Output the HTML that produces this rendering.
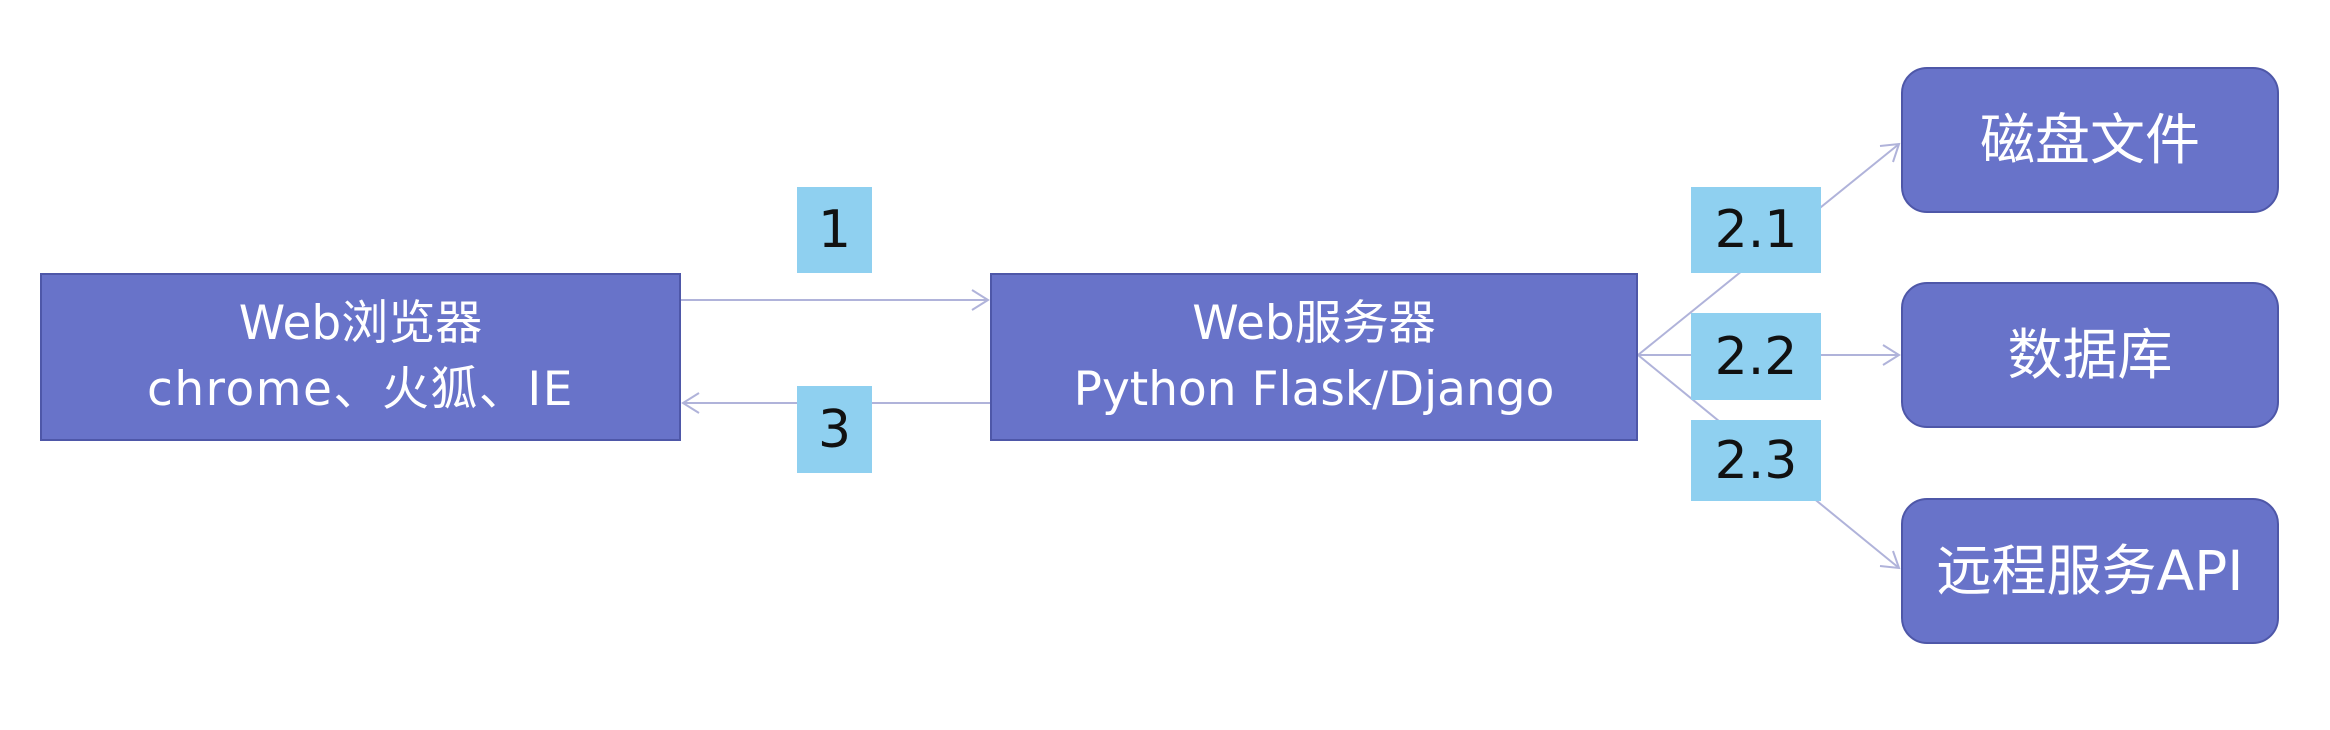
<!DOCTYPE html>
<html><head><meta charset="utf-8"><style>
body{margin:0;width:2330px;height:730px;background:#fff;overflow:hidden;position:relative;font-family:"DejaVu Sans","Noto Sans CJK SC",sans-serif}
.b{position:absolute;background:#6873c9;border:2px solid #4e57a8;box-sizing:border-box;color:#fff;display:flex;flex-direction:column;align-items:center;justify-content:center;font-size:47px;line-height:66px;text-align:center}
.r{border-radius:26px;font-size:55px}
.l{position:absolute;background:#8fd0f0;color:#111;font-size:52px;display:flex;align-items:center;justify-content:center}
svg{position:absolute;left:0;top:0}
</style></head><body>
<svg width="2330" height="730"><g stroke="#b0b3da" stroke-width="2" fill="none">
<line x1="681" y1="300" x2="988" y2="300"/><polyline points="972,290 988,300 972,310"/>
<line x1="990" y1="403" x2="683" y2="403"/><polyline points="699,393 683,403 699,413"/>
<line x1="1638" y1="355" x2="1899" y2="144"/><polyline points="1880,146 1899,144 1893,162"/>
<line x1="1638" y1="355" x2="1899" y2="355"/><polyline points="1883,345 1899,355 1883,365"/>
<line x1="1638" y1="355" x2="1899" y2="568"/><polyline points="1893,551 1899,568 1880,566"/>
</g></svg>
<div class="b" style="left:40px;top:273px;width:641px;height:168px"><div>Web浏览器</div><div style="letter-spacing:1.5px">chrome、火狐、IE</div></div>
<div class="b" style="left:990px;top:273px;width:648px;height:168px"><div>Web服务器</div><div>Python Flask/Django</div></div>
<div class="b r" style="left:1901px;top:67px;width:378px;height:146px">磁盘文件</div>
<div class="b r" style="left:1901px;top:282px;width:378px;height:146px">数据库</div>
<div class="b r" style="left:1901px;top:498px;width:378px;height:146px">远程服务API</div>
<div class="l" style="left:797px;top:187px;width:75px;height:86px">1</div>
<div class="l" style="left:797px;top:386px;width:75px;height:87px">3</div>
<div class="l" style="left:1691px;top:187px;width:130px;height:86px">2.1</div>
<div class="l" style="left:1691px;top:313px;width:130px;height:87px">2.2</div>
<div class="l" style="left:1691px;top:420px;width:130px;height:81px">2.3</div>
</body></html>
